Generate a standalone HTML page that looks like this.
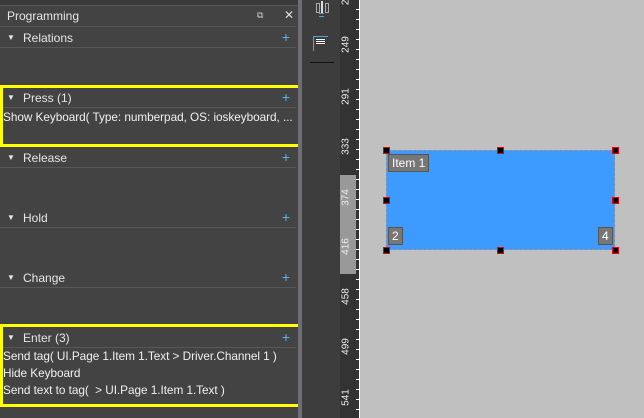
<!DOCTYPE html><html><head><style>
body{margin:0;width:644px;height:418px;overflow:hidden;background:#c0c0c0;font-family:"Liberation Sans",sans-serif;position:relative}
.a{position:absolute}
.panel{left:0;top:0;width:298px;height:418px;background:#434343}
.hdr{position:absolute;left:0;width:296px;height:19px;border-bottom:1px solid #575757;color:#e6e6e6;font-size:12px;line-height:20px}
.hdr .t{position:absolute;left:23px}
.hdr .ar{position:absolute;left:7px;top:0;font-size:8px}
.hdr .p{position:absolute;right:6px;top:-1px;color:#5ab4ea;font-size:14px}
.txt{position:absolute;left:3px;color:#f0f0f0;font-size:11.8px;letter-spacing:-0.05px}
.yb{position:absolute;border:3px solid #ffff00;box-sizing:border-box}
.lab{position:absolute;color:#eee;font-size:10px;transform:rotate(-90deg);transform-origin:center;width:24px;text-align:center}
.h{position:absolute;width:5px;height:5px;background:#000;border:1px solid #e00}
.tag{position:absolute;background:#777;border:1px solid #555;color:#fff;font-size:12px;line-height:16px;padding:0 3px}
</style></head><body>
<div class="a panel"></div>
<div class="a" style="left:0;top:0;width:298px;height:5px;background:#3a3a3a;border-bottom:1px solid #555"></div>
<div class="a" style="left:7px;top:9px;color:#e6e6e6;font-size:12px">Programming</div>
<div class="a" style="left:257px;top:10px;color:#ccc;font-size:9px">⧉</div>
<div class="a" style="left:284px;top:8px;color:#ddd;font-size:12px">✕</div>
<div class="a" style="left:0;top:26px;width:296px;height:1px;background:#555"></div>
<div class="hdr" style="top:28px"><span class="ar">▼</span><span class="t">Relations</span><span class="p">+</span></div>
<div class="hdr" style="top:88px"><span class="ar">▼</span><span class="t">Press (1)</span><span class="p">+</span></div>
<div class="txt" style="top:110px">Show Keyboard( Type: numberpad, OS: ioskeyboard, ...</div>
<div class="hdr" style="top:148px"><span class="ar">▼</span><span class="t">Release</span><span class="p">+</span></div>
<div class="hdr" style="top:208px"><span class="ar">▼</span><span class="t">Hold</span><span class="p">+</span></div>
<div class="hdr" style="top:268px"><span class="ar">▼</span><span class="t">Change</span><span class="p">+</span></div>
<div class="hdr" style="top:328px"><span class="ar">▼</span><span class="t">Enter (3)</span><span class="p">+</span></div>
<div class="txt" style="top:349px">Send tag( UI.Page 1.Item 1.Text &gt; Driver.Channel 1 )</div>
<div class="txt" style="top:366px">Hide Keyboard</div>
<div class="txt" style="top:383px">Send text to tag(&nbsp; &gt; UI.Page 1.Item 1.Text )</div>
<div class="yb" style="left:0;top:85px;width:301px;height:62px"></div>
<div class="yb" style="left:0;top:324px;width:301px;height:83px"></div>
<div class="a" style="left:298px;top:0;width:4px;height:418px;background:#6e6e72"></div>
<div class="a" style="left:302px;top:0;width:38px;height:418px;background:#3d3d3d"></div>
<div class="a" style="left:316px;top:3px;width:2px;height:8px;border:1px solid #aaa"></div>
<div class="a" style="left:321px;top:1px;width:2px;height:12px;background:#ddd"></div>
<div class="a" style="left:325px;top:3px;width:2px;height:8px;border:1px solid #aaa"></div>
<div class="a" style="left:319px;top:13px;width:5px;height:2px;border-top:1px solid #4aa8e0;border-bottom:1px solid #4aa8e0"></div>
<div class="a" style="left:313px;top:36px;width:14px;height:14px;border-left:1px solid #4aa8e0;border-top:1px solid #4aa8e0"></div>
<div class="a" style="left:316px;top:39px;width:9px;height:1px;background:#fff;box-shadow:0 2px #fff,0 4px #fff"></div>
<div class="a" style="left:310px;top:62px;width:24px;height:1px;background:#111"></div>
<div class="a" style="left:340px;top:0;width:19px;height:418px;background:#333"></div>
<div class="a" style="left:340px;top:175px;width:19px;height:99px;background:#999"></div>
<div class="a" style="left:359px;top:0;width:1px;height:418px;background:#fff"></div>
<div class="a" style="left:356px;top:0;width:3px;height:418px;background:repeating-linear-gradient(#333 0 9px,#fff 9px 10px)"></div>
<div class="lab" style="left:334px;top:39px">249</div>
<div class="lab" style="left:334px;top:91px">291</div>
<div class="lab" style="left:334px;top:141px">333</div>
<div class="lab" style="left:334px;top:192px">374</div>
<div class="lab" style="left:334px;top:241px">416</div>
<div class="lab" style="left:334px;top:291px">458</div>
<div class="lab" style="left:334px;top:341px">499</div>
<div class="lab" style="left:334px;top:392px">541</div>
<div class="lab" style="left:334px;top:-6px">20</div>
<div class="a" style="left:386px;top:150px;width:229px;height:100px;background:#3d9bff;border:1px dashed #999;box-sizing:border-box"></div>
<div class="tag" style="left:388px;top:154px">Item 1</div>
<div class="tag" style="left:388px;top:227px">2</div>
<div class="tag" style="left:598px;top:227px">4</div>
<div class="h" style="left:383px;top:147px"></div><div class="h" style="left:497px;top:147px"></div><div class="h" style="left:612px;top:147px"></div>
<div class="h" style="left:383px;top:197px"></div><div class="h" style="left:612px;top:197px"></div>
<div class="h" style="left:383px;top:247px"></div><div class="h" style="left:497px;top:247px"></div><div class="h" style="left:612px;top:247px"></div>
</body></html>
